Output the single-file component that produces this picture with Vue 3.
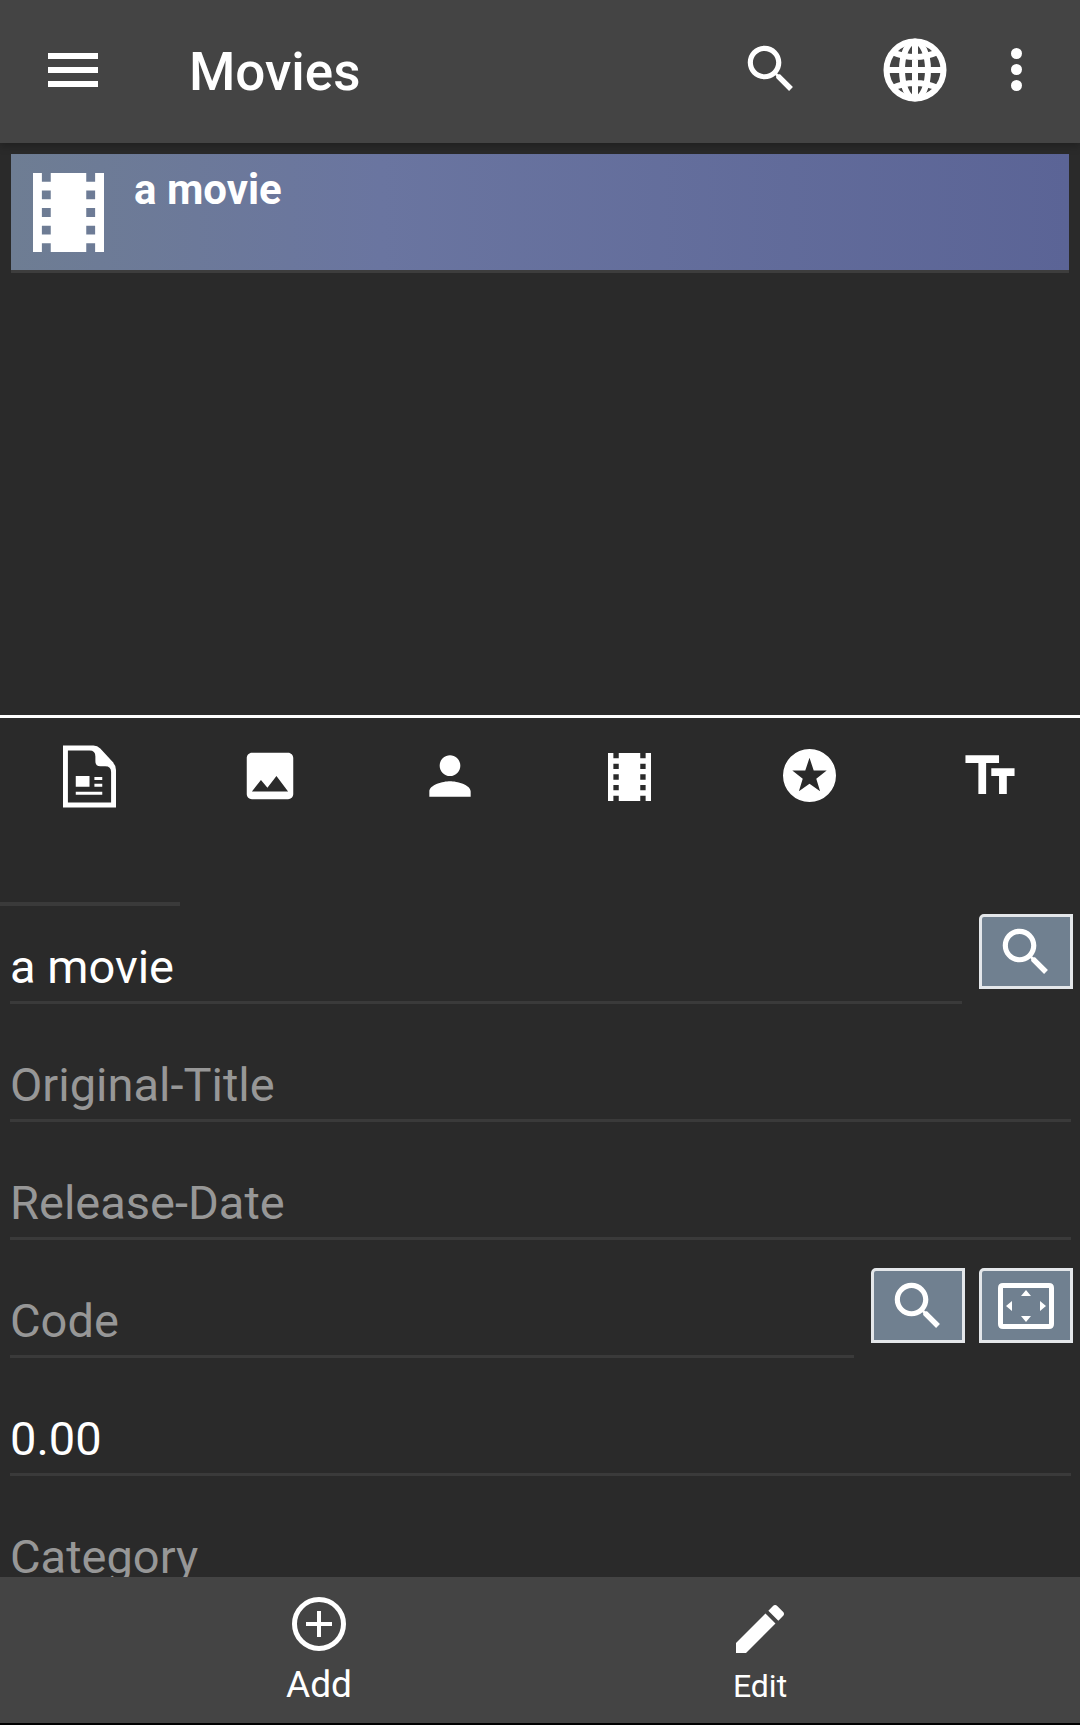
<template>
  <div class="app">
    <header class="toolbar">
      <div class="menu-btn"><span></span><span></span><span></span></div>
      <h1 class="title">Movies</h1>
      <svg class="tb-search" viewBox="0 0 24 24"><path :d="searchPath" /></svg>
      <svg class="tb-globe" viewBox="0 0 64 64">
        <circle cx="32" cy="32" r="28.500" />
        <ellipse cx="32" cy="32" rx="13" ry="28.500" />
        <path d="M32 3V61M3 32H61M9 14Q32 24 55 14M9 50Q32 40 55 50" />
      </svg>
      <div class="dots"><span></span><span></span><span></span></div>
    </header>

    <section class="list">
      <div class="movie-item">
        <svg class="movie-icon" viewBox="4 3 16 18" preserveAspectRatio="none"><path :d="filmPath" /></svg>
        <span class="movie-name">a movie</span>
      </div>
    </section>

    <div class="divider"></div>

    <nav class="tabs">
      <div v-for="(tab, i) in tabs" :key="tab" class="tab" :class="{ active: i === 0 }">
        <svg v-if="tab === 'info'" class="tab-doc" viewBox="0 0 54 63">
          <path fill-rule="evenodd" d="M0 0H31Q35 0 38 3L50 16Q54 20 54 25V63H0ZM5 5V58H49V27Q49 21 43 21H38Q33 21 33 16V11Q33 5 27 5Z" />
          <path d="M13 31H27V42H13ZM32 32H40V35H32ZM32 39H40V42H32ZM13 47H40V50H13Z" />
        </svg>
        <svg v-else-if="tab === 'image'" class="tab-icon" viewBox="0 0 24 24">
          <path d="M21 19V5c0-1.1-.9-2-2-2H5c-1.1 0-2 .9-2 2v14c0 1.1.9 2 2 2h14c1.1 0 2-.9 2-2zM8.5 13.5l2.5 3.01L14.5 12l4.5 6H5l3.5-4.5z" />
        </svg>
        <svg v-else-if="tab === 'person'" class="tab-icon" viewBox="0 0 24 24">
          <path d="M12 12c2.21 0 4-1.79 4-4s-1.79-4-4-4-4 1.79-4 4 1.79 4 4 4zm0 2c-2.67 0-8 1.34-8 4v2h16v-2c0-2.66-5.33-4-8-4z" />
        </svg>
        <svg v-else-if="tab === 'film'" class="tab-film" viewBox="4 3 16 18" preserveAspectRatio="none"><path :d="filmPath" /></svg>
        <svg v-else-if="tab === 'star'" class="tab-star" viewBox="0 0 54 54">
          <path fill-rule="evenodd" d="M27 0A27 27 0 1 1 27 54A27 27 0 1 1 27 0ZM27 9L22.700 21.900H9.500L20.100 30.200L16.200 43L27 35.300L37.800 43L33.900 30.200L44.500 21.900H31.300Z" />
        </svg>
        <svg v-else class="tab-icon" viewBox="0 0 24 24">
          <path d="M2.500 4v3h5v12h3V7h5V4h-13zm19 5h-9v3h3v7h3v-7h3V9z" />
        </svg>
      </div>
    </nav>

    <main class="fields">
      <div v-for="field in fields" :key="field.label" class="field">
        <div class="input" :class="{ empty: !field.value }">{{ field.value || field.label }}</div>
        <button v-if="field.search" class="action" type="button">
          <svg viewBox="0 0 24 24"><path :d="searchPath" /></svg>
        </button>
        <button v-if="field.scan" class="action" type="button">
          <svg class="scan" viewBox="0 0 56 46">
            <path fill-rule="evenodd" d="M5 0H51Q56 0 56 5V41Q56 46 51 46H5Q0 46 0 41V5Q0 0 5 0ZM5 5V41H51V5Z" />
            <path d="M28 7L33 13H23ZM28 39L23 33H33ZM8 23L14 18V28ZM48 23L42 18V28Z" />
          </svg>
        </button>
      </div>
    </main>

    <footer class="footer">
      <div class="foot-btn add">
        <svg viewBox="0 0 54 54">
          <circle cx="27" cy="27" r="24.500" class="ring" />
          <path d="M25 14H29V25H40V29H29V40H25V29H14V25H25Z" />
        </svg>
        <span>Add</span>
      </div>
      <div class="foot-btn edit">
        <svg viewBox="3 3 18 18"><path d="M3 17.250V21h3.750L17.810 9.940l-3.750-3.750L3 17.250zM20.710 7.040c.39-.39.39-1.020 0-1.410l-2.340-2.340c-.39-.39-1.020-.39-1.410 0l-1.830 1.830 3.750 3.750 1.830-1.830z" /></svg>
        <span>Edit</span>
      </div>
    </footer>
  </div>
</template>

<script setup>
const searchPath =
  'M15.500 14h-.79l-.28-.27C15.410 12.590 16 11.110 16 9.500 16 5.910 13.090 3 9.500 3S3 5.910 3 9.500 5.910 16 9.500 16c1.610 0 3.090-.59 4.230-1.570l.27.28v.79l5 4.990L20.490 19l-4.990-5zm-6 0C7.010 14 5 11.990 5 9.500S7.010 5 9.500 5 14 7.010 14 9.500 11.990 14 9.500 14z';
const filmPath =
  'M18 3v2h-2V3H8v2H6V3H4v18h2v-2h2v2h8v-2h2v2h2V3h-2zM8 17H6v-2h2v2zm0-4H6v-2h2v2zm0-4H6V7h2v2zm10 8h-2v-2h2v2zm0-4h-2v-2h2v2zm0-4h-2V7h2v2z';

const tabs = ['info', 'image', 'person', 'film', 'star', 'text'];

const fields = [
  { label: 'Title', value: 'a movie', search: true },
  { label: 'Original-Title' },
  { label: 'Release-Date' },
  { label: 'Code', search: true, scan: true },
  { label: 'Rating', value: '0.00' },
  { label: 'Category' },
];
</script>

<style>
html,
body {
  margin: 0;
  background: #2a2a2a;
}
</style>

<style scoped>
.app {
  display: flex;
  flex-direction: column;
  width: 1080px;
  height: 1725px;
  overflow: hidden;
  background: #2a2a2a;
  color: #fff;
  font-family: Roboto, "Liberation Sans", sans-serif;
}

svg {
  display: block;
  fill: #fff;
}

.toolbar {
  position: relative;
  z-index: 1;
  display: flex;
  align-items: center;
  flex: none;
  height: 143px;
  background: #444;
  box-shadow: 0 3px 8px rgba(0, 0, 0, 0.25);
}

.menu-btn {
  display: flex;
  flex-direction: column;
  gap: 8px;
  width: 50px;
  margin: -4px 0 0 48px;
}

.menu-btn span {
  height: 6px;
  background: #fff;
}

.title {
  flex: 1;
  margin: 1px 0 0 91px;
  font-size: 53px;
  font-weight: 500;
  line-height: 140px;
}

.tb-search {
  width: 62px;
  height: 62px;
  margin: -6px 0 0 0;
}

.tb-globe {
  width: 64px;
  height: 64px;
  margin: -4px 0 0 81px;
  fill: none;
  stroke: #fff;
  stroke-width: 6;
}

.dots {
  display: flex;
  flex-direction: column;
  gap: 5px;
  margin: -4px 58px 0 64px;
}

.dots span {
  width: 11px;
  height: 11px;
  border-radius: 50%;
  background: #fff;
}

.list {
  flex: none;
  box-sizing: border-box;
  height: 572px;
  padding: 11px 11px 0;
}

.movie-item {
  display: flex;
  align-items: flex-start;
  box-sizing: border-box;
  height: 119px;
  padding: 19px 0 0 22px;
  border-bottom: 3px solid #3d3d3d;
  background: linear-gradient(90deg, #6e7d93 0%, #6a75a0 35%, #5b6496 100%);
}

.movie-icon {
  width: 71px;
  height: 79px;
}

.movie-name {
  margin: -9px 0 0 30px;
  font-size: 42px;
  font-weight: 700;
  line-height: 52px;
}

.divider {
  flex: none;
  height: 3px;
  background: #fff;
}

.tabs {
  display: grid;
  flex: none;
  grid-template-columns: repeat(6, 180px);
  height: 188px;
}

.tab {
  display: flex;
  justify-content: center;
  box-sizing: border-box;
  padding: 27px 1px 0 0;
}

.tab.active {
  border-bottom: 4px solid #3a3a3a;
}

.tab-icon {
  width: 62px;
  height: 62px;
}

.tab-doc {
  width: 53px;
  height: 63px;
}

.tab-film {
  width: 43px;
  height: 48px;
  margin-top: 8px;
}

.tab-star {
  width: 53px;
  height: 53px;
  margin-top: 4px;
}

.fields {
  display: flex;
  flex: 1;
  flex-direction: column;
  gap: 52px;
  min-height: 0;
  padding-top: 31px;
  overflow: hidden;
}

.field {
  display: flex;
  flex: none;
  align-items: flex-end;
  gap: 17px;
  height: 66px;
  padding: 0 7px 0 10px;
}

.input {
  flex: 1;
  box-sizing: border-box;
  height: 67px;
  margin-bottom: -1px;
  padding-top: 4px;
  border-bottom: 3px solid #3a3a3a;
  font-size: 47px;
  line-height: 52px;
}

.input:last-child {
  margin-right: 2px;
}

.input.empty {
  color: #979797;
}

.action {
  display: flex;
  flex: none;
  align-items: center;
  justify-content: center;
  box-sizing: border-box;
  width: 94px;
  height: 75px;
  margin-bottom: 14px;
  padding: 0;
  border: 3px solid #e4e7ea;
  border-top-left-radius: 5px;
  background: #708090;
}

.action + .action {
  margin-left: -3px;
}

.action svg {
  width: 62px;
  height: 62px;
}

.action svg.scan {
  width: 56px;
  height: 46px;
}

.footer {
  display: grid;
  flex: none;
  grid-template-columns: 638px 244px;
  height: 146px;
  border-bottom: 2px solid #000;
  background: #444;
}

.foot-btn {
  display: flex;
  flex-direction: column;
  align-items: center;
}

.foot-btn.add svg {
  width: 54px;
  height: 54px;
  margin-top: 20px;
}

.foot-btn .ring {
  fill: none;
  stroke: #fff;
  stroke-width: 5;
}

.foot-btn.add span {
  margin-top: 12px;
  font-size: 37px;
  line-height: 44px;
}

.foot-btn.edit svg {
  width: 48px;
  height: 48px;
  margin-top: 28px;
}

.foot-btn.edit span {
  margin-top: 13px;
  font-size: 32px;
  line-height: 40px;
}
</style>
